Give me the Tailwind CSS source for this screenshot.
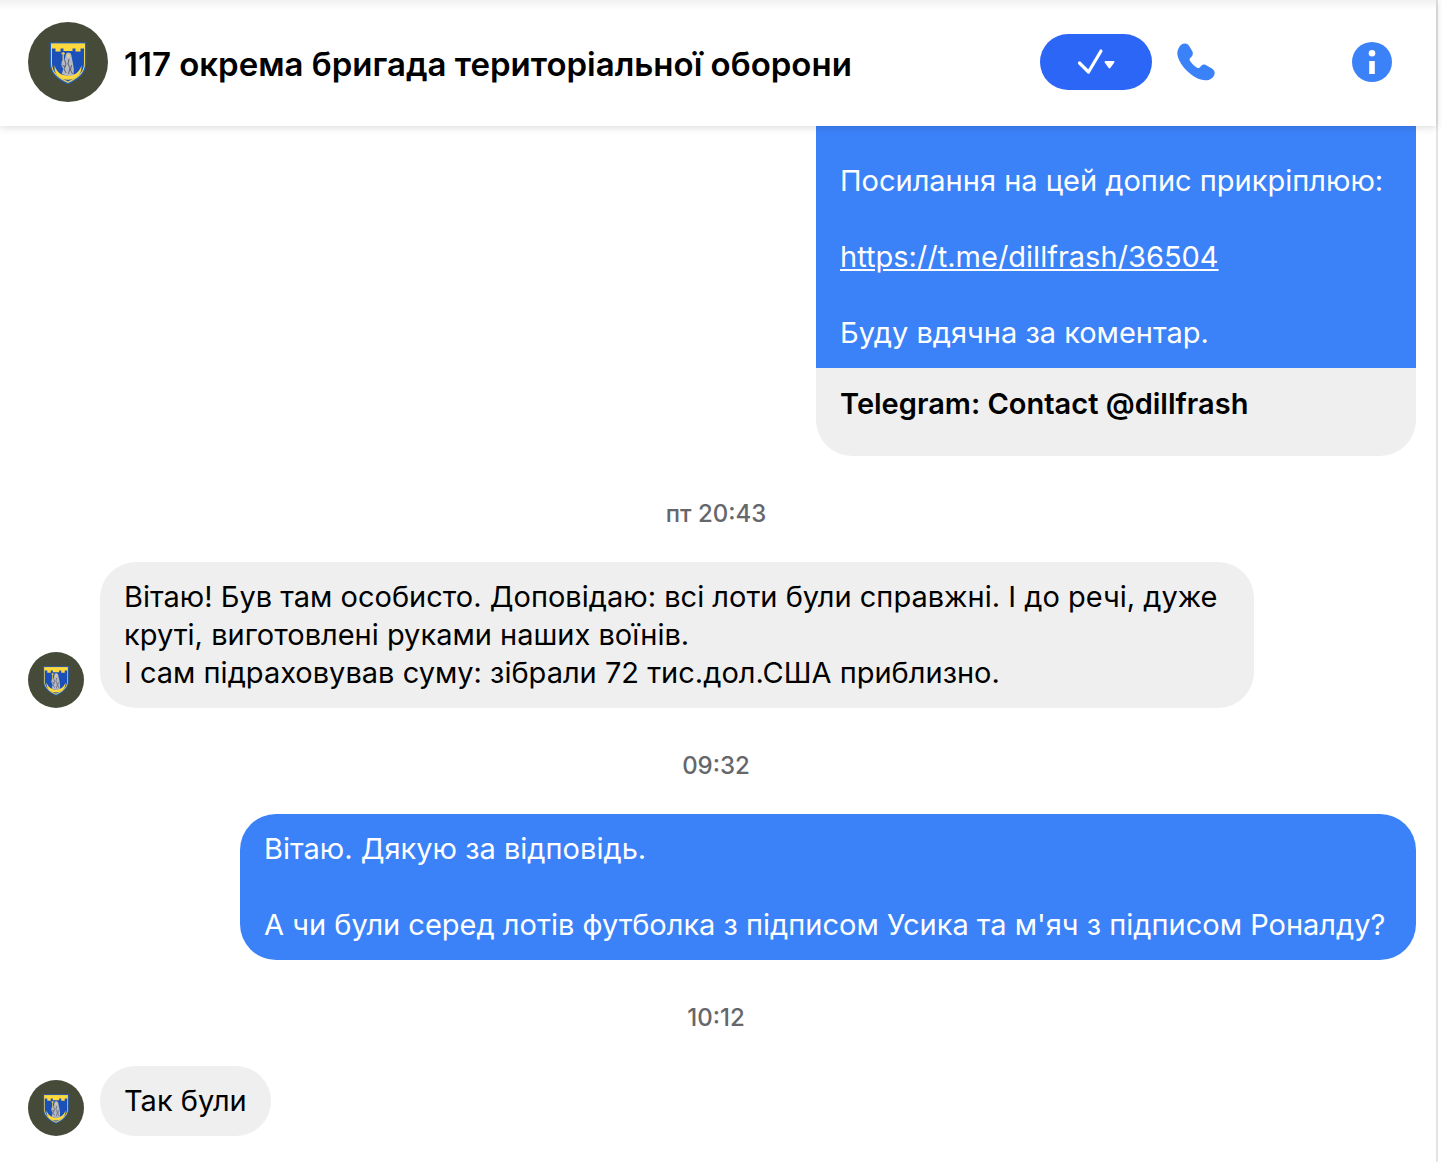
<!DOCTYPE html>
<html lang="uk">
<head>
  <meta charset="UTF-8">
  <meta name="viewport" content="width=device-width, initial-scale=1.0">
  <title>117 окрема бригада територіальної оборони</title>
  <script src="https://cdn.jsdelivr.net/npm/@tailwindcss/browser@4"></script>
</head>
<body class="bg-white font-['Inter','Liberation_Sans',sans-serif] text-black">
  <!-- brigade emblem, used for every avatar -->
  <svg class="hidden">
    <symbol id="emblem" viewBox="0 0 80 80">
      <circle cx="40" cy="40" r="40" fill="#454a39"/>
      <path d="M21.800 20.300h36.400v20.700c0 11-7.700 16.500-18.200 21.500-10.500-5-18.200-10.500-18.200-21.500z" fill="#2460bd"/>
      <path d="M23 21.500h34v19.500c0 10-7 15.200-17 20-10-4.800-17-10-17-20z" fill="#e9d45a"/>
      <path d="M24 22.500h32v18.500c0 9.300-6.500 14-16 18.600-9.500-4.600-16-9.300-16-18.600z" fill="#1b50b8"/>
      <path d="M23.500 21.800h33v4.700h-4v3h-5v-3h-3v2.500h-9v-2.500h-3v3h-5v-3h-4z" fill="#ffd83d"/>
      <path d="M26.500 43.500c2.500 7 6.500 10 13.500 10s11-3 13.500-10c.8 8.500-5.500 14.300-13.500 14.300S25.700 52 26.500 43.500z" fill="#ffd83d"/>
      <path d="M37.800 32.500c.8-2.800 4.700-2.800 5.400.2l.8 4 1 5 .8 5.500-.3 5.800c-2 1.200-4.500 1.200-7 .6l-4.700-1.600 1.400-5-1.900-4 .6-4 2.900-1.500z" fill="#b5b9c4"/>
      <path d="M36.500 38l1.500 4-2 5 2 4M41 37l-1 5 2 4-1.500 6M43.500 43l-1 5 2 4M34.500 43.500l3 1" stroke="#535866" stroke-width=".9" fill="none"/>
      <path d="M38.800 33.500c.5-2 2.700-2 3.200 0v2h-3.200z" fill="#ddd08a"/>
      <path d="M35.200 30v9M33.500 31.500h3.400" stroke="#e8ca50" stroke-width="1.300"/>
    </symbol>
  </svg>

  <div class="min-h-screen mr-1 border-r-2 border-[#e4e4e4]">
    <header class="relative z-10 h-[126px] px-7 pb-0.5 flex items-center bg-white bg-linear-to-b from-[#f1f1f1] to-white to-[10px] shadow-[0_1px_8px_rgba(0,0,0,0.16)]">
      <svg class="size-20 shrink-0" role="img" aria-label="117 бригада"><use href="#emblem"/></svg>
      <h1 class="ml-4 pt-1 flex-1 text-[33px] leading-10 font-semibold whitespace-nowrap">117 окрема бригада територіальної оборони</h1>
      <button class="w-28 h-14 shrink-0 rounded-full bg-[#2b66f6] flex items-center justify-center" aria-label="Позначити як виконане">
        <svg class="w-10 h-8" viewBox="0 0 40 32" fill="none">
          <path d="M3.500 17l9 9L25 5" stroke="#fff" stroke-width="3.200" stroke-linecap="round" stroke-linejoin="round"/>
          <path d="M29.500 16h8l-4 5.500z" fill="#fff" stroke="#fff" stroke-width="2" stroke-linejoin="round"/>
        </svg>
      </button>
      <button class="ml-6 shrink-0" aria-label="Подзвонити">
        <svg class="size-10" viewBox="0 0 40 40">
          <path d="M2.500 6.500C4 3 6 1.500 9 1.500c2 0 3.200 1 4.500 3l2.700 4.500c1.200 2.200.8 4-.7 5.700l-1.300 1.300c-.8.900-.8 1.700-.2 2.700 1.700 2.800 4.300 5.300 7 7 1.100.6 1.900.5 2.700-.3l1.400-1.400c1.600-1.500 3.500-1.900 5.600-.6l4.800 2.900c2.500 1.600 3.500 3.300 3.100 5.400-.8 4.200-4.600 6.600-9.100 6.600-6 0-13.500-4.100-19.200-10C4.500 22.300 1 15 1.300 10.500c.1-1.500.6-2.700 1.200-4z" fill="#3b82f8"/>
        </svg>
      </button>
      <button class="ml-34 mr-4 shrink-0" aria-label="Інформація">
        <svg class="size-10" viewBox="0 0 40 40">
          <circle cx="20" cy="20" r="20" fill="#3b82f8"/>
          <circle cx="20" cy="11.300" r="3.300" fill="#fff"/>
          <path d="M17.200 19h5.600v13h-5.600z" fill="#fff"/>
        </svg>
      </button>
    </header>

    <main class="pl-7 pr-5 pb-6 text-[29px] leading-[38px]">
      <article class="ml-auto w-[600px] rounded-b-[36px] overflow-hidden">
        <div class="px-6 pt-9 pb-4 bg-[#3b82f8] text-white">
          <p>Посилання на цей допис прикріплюю:</p>
          <p class="mt-[38px]"><a href="https://t.me/dillfrash/36504" class="underline">https://t.me/dillfrash/36504</a></p>
          <p class="mt-[38px]">Буду вдячна за коментар.</p>
        </div>
        <div class="px-6 pt-4 pb-8 bg-[#efefef] leading-10 font-semibold">Telegram: Contact @dillfrash</div>
      </article>

      <p class="pt-10 pb-[30px] pr-3 text-center text-2xl leading-9 font-medium text-[#65676b]"><time>пт 20:43</time></p>

      <article class="flex items-end gap-4">
        <svg class="size-14 shrink-0"><use href="#emblem"/></svg>
        <div class="w-[1154px] px-6 py-4 rounded-[36px] bg-[#efefef]">
          <p>Вітаю! Був там особисто. Доповідаю: всі лоти були справжні. І до речі, дуже круті, виготовлені руками наших воїнів.</p>
          <p>І сам підраховував суму: зібрали 72 тис.дол.США приблизно.</p>
        </div>
      </article>

      <p class="pt-10 pb-[30px] pr-3 text-center text-2xl leading-9 font-medium text-[#65676b]"><time>09:32</time></p>

      <article class="ml-auto w-[1176px] px-6 py-4 rounded-[36px] bg-[#3b82f8] text-white">
        <p>Вітаю. Дякую за відповідь.</p>
        <p class="mt-[38px]">А чи були серед лотів футболка з підписом Усика та м'яч з підписом Роналду?</p>
      </article>

      <p class="pt-10 pb-[30px] pr-3 text-center text-2xl leading-9 font-medium text-[#65676b]"><time>10:12</time></p>

      <article class="flex items-end gap-4">
        <svg class="size-14 shrink-0"><use href="#emblem"/></svg>
        <p class="px-6 py-4 rounded-[36px] bg-[#efefef]">Так були</p>
      </article>
    </main>
  </div>
</body>
</html>
